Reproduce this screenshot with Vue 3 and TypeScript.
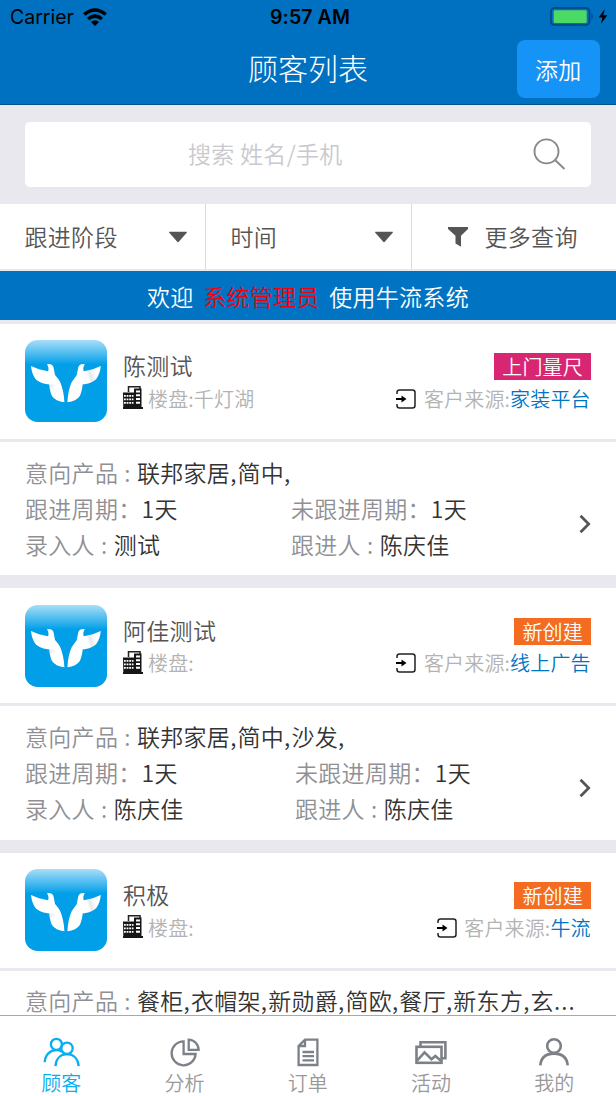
<script setup lang="ts">
interface Customer {
  name: string
  estate: string
  status: string
  tone: 'pink' | 'orange'
  source: string
  products: string
  cycle: string
  idle: string
  creator: string
  follower: string
  offset: 'near' | 'far'
}

const customers: Customer[] = [
  { name: '陈测试', estate: '千灯湖', status: '上门量尺', tone: 'pink', source: '家装平台', products: '联邦家居,简中,', cycle: '1天', idle: '1天', creator: '测试', follower: '陈庆佳', offset: 'near' },
  { name: '阿佳测试', estate: '', status: '新创建', tone: 'orange', source: '线上广告', products: '联邦家居,简中,沙发,', cycle: '1天', idle: '1天', creator: '陈庆佳', follower: '陈庆佳', offset: 'far' },
  { name: '积极', estate: '', status: '新创建', tone: 'orange', source: '牛流', products: '餐柜,衣帽架,新勋爵,简欧,餐厅,新东方,玄...', cycle: '', idle: '', creator: '', follower: '', offset: 'far' },
]

const pieces = (text: string) => text.split(/([,.])/).filter(Boolean)

const tabs = [
  { id: 'customer', label: '顾客' },
  { id: 'analysis', label: '分析' },
  { id: 'order', label: '订单' },
  { id: 'activity', label: '活动' },
  { id: 'mine', label: '我的' },
]
const activeTab = 'customer'
</script>

<template>
  <div class="screen">
    <header class="header">
      <div class="status">
        <div class="carrier">
          <span>Carrier</span>
          <svg class="wifi" width="24" height="18" viewBox="0 0 24 18">
            <g fill="none" stroke="#000" stroke-width="3.5">
              <path d="M1.3 6.5 Q12 -2.4 22.7 6.5" />
              <path d="M5.1 11 Q12 5.2 18.9 11" />
            </g>
            <path d="M8 14 Q12 10.5 16 14 L12 18Z" />
          </svg>
        </div>
        <span class="clock">9:57 AM</span>
        <svg class="battery" width="60" height="20" viewBox="0 0 60 20">
          <rect x="1" y="1" width="38.5" height="17" rx="3.5" fill="none" stroke="#00417a" stroke-width="1.6" />
          <rect x="3.7" y="3.3" width="33" height="12.6" rx="1.2" fill="#4cd964" />
          <path d="M41.5 6.3 Q44 9.5 41.5 12.7Z" fill="#00417a" />
          <path d="M54.8 2 L48.7 10.5 H52.5 L50.8 17 L57.3 8.2 H53.4Z" />
        </svg>
      </div>
      <div class="navbar">
        <h1>顾客列表</h1>
        <button class="add">添加</button>
      </div>
    </header>

    <div class="search-wrap">
      <div class="search">
        <span class="placeholder">搜索 姓名/手机</span>
        <svg width="34" height="34" viewBox="0 0 34 34" fill="none" stroke="#888" stroke-width="1.9">
          <circle cx="14.5" cy="13.4" r="12" />
          <path d="M23 22 L32.5 31" />
        </svg>
      </div>
    </div>

    <nav class="filters">
      <div class="filter">
        <span>跟进阶段</span>
        <svg width="20" height="12" viewBox="0 0 20 12"><path d="M1.6 .7H18.4Q19.5 .7 18.7 1.7L11 10.6Q10 11.7 9 10.6L1.3 1.7Q.5 .7 1.6 .7Z" fill="#555" /></svg>
      </div>
      <div class="filter">
        <span>时间</span>
        <svg width="20" height="12" viewBox="0 0 20 12"><path d="M1.6 .7H18.4Q19.5 .7 18.7 1.7L11 10.6Q10 11.7 9 10.6L1.3 1.7Q.5 .7 1.6 .7Z" fill="#555" /></svg>
      </div>
      <div class="filter more">
        <svg width="20" height="20" viewBox="0 0 20 20"><path d="M0 0H20V2L13 8.7V19.7L7.5 16.5V8.7L0 2Z" fill="#555" /></svg>
        <span>更多查询</span>
      </div>
    </nav>

    <div class="banner"><span>欢迎</span><em>系统管理员</em><span>使用牛流系统</span></div>

    <main class="list">
      <article v-for="c in customers" :key="c.name" class="card">
        <div class="summary">
          <svg class="logo" width="82" height="82" viewBox="0 0 82 82">
            <defs>
              <linearGradient id="sky" x1="0" y1="0" x2="0" y2="1">
                <stop offset="0" stop-color="#a9def8" />
                <stop offset=".3" stop-color="#019fe8" />
              </linearGradient>
              <linearGradient id="stem" x1="0" y1="0" x2=".5" y2="1">
                <stop offset=".4" stop-color="#fff" />
                <stop offset=".5" stop-color="#e6e7eb" />
                <stop offset=".68" stop-color="#fff" />
              </linearGradient>
              <linearGradient id="wing" x1="0" y1="0" x2="1" y2=".3">
                <stop offset=".35" stop-color="#fff" />
                <stop offset=".65" stop-color="#e8e9ed" />
                <stop offset=".8" stop-color="#fff" />
              </linearGradient>
            </defs>
            <rect width="82" height="82" rx="12.5" fill="url(#sky)" />
            <g>
              <path d="M22 24.2Q27.5 23.6 28.6 27.5L30 35L35 42Q38.8 50 39.4 62.2Q30.5 61.5 27 56Q25 52 24 44L22.8 32Q24.6 28 22 24.2Z" fill="url(#stem)" />
              <path d="M6 26L14 29.3L24 31.6Q31.5 35 35 42L36.5 47Q31 44.4 22.5 44.2Q14 43 10.5 39Q6.8 34 6 26Z" fill="#fff" />
            </g>
            <g transform="translate(81.8 0) scale(-1 1)">
              <path d="M22 24.2Q27.5 23.6 28.6 27.5L30 35L35 42Q38.8 50 39.4 62.2Q30.5 61.5 27 56Q25 52 24 44L22.8 32Q24.6 28 22 24.2Z" fill="#fff" />
              <path d="M6 26L14 29.3L24 31.6L25 44.2H22.5Q14 43 10.5 39Q6.8 34 6 26Z" fill="url(#wing)" />
            </g>
          </svg>
          <div class="info">
            <div class="row">
              <span class="name">{{ c.name }}</span>
              <span class="tag" :class="c.tone">{{ c.status }}</span>
            </div>
            <div class="row meta">
              <div class="estate">
                <svg width="20" height="23" viewBox="0 0 20 23">
                  <path d="M5.5 6V.8H17V3" fill="none" stroke="#222" stroke-width="1.5" />
                  <path d="M0 6.5H11V2.5H18.5V21H20V23H0V21H.3Z" fill="#161616" />
                  <path d="M1 9.8H10.5M1 13.3H10.5M1 16.8H10.5" stroke="#fff" stroke-width="1.8" stroke-dasharray="1.8 .8" />
                  <path d="M13 5.6H17M13 9.3H17M13 13H17M13 16.7H17" stroke="#fff" stroke-width="2" />
                </svg>
                <span>楼盘:{{ c.estate }}</span>
              </div>
              <div class="source">
                <svg width="20" height="20" viewBox="0 0 20 20">
                  <path d="M1 5V3.5Q1 1 3.5 1H16.5Q19 1 19 3.5V16.5Q19 19 16.5 19H3.5Q1 19 1 16.5V15" fill="none" stroke="#222" stroke-width="1.5" />
                  <path d="M0 9H5.5V6.5L10.5 10L5.5 13.5V11H0Z" />
                </svg>
                <span>客户来源:<b>{{ c.source }}</b></span>
              </div>
            </div>
          </div>
        </div>
        <div class="detail" :class="c.offset">
          <p class="wide"><i>意向产品 : </i><span v-for="(piece, n) in pieces(c.products)" :key="n" :class="{ mark: piece.length === 1 && ',.'.includes(piece) }">{{ piece }}</span></p>
          <template v-if="c.cycle">
            <p><i>跟进周期：</i>{{ c.cycle }}</p>
            <p><i>未跟进周期：</i>{{ c.idle }}</p>
            <p><i>录入人 : </i>{{ c.creator }}</p>
            <p><i>跟进人 : </i>{{ c.follower }}</p>
          </template>
          <svg class="chevron" width="12" height="20" viewBox="0 0 12 20"><path d="M1.5 1.7L9.7 10L1.5 18.3" fill="none" stroke="#555" stroke-width="2.7" /></svg>
        </div>
      </article>
    </main>

    <footer class="tabbar">
      <div v-for="t in tabs" :key="t.id" class="tab" :class="{ active: t.id === activeTab }">
        <svg width="40" height="34" viewBox="0 0 40 34" fill="none" stroke="currentColor" stroke-width="2.3">
          <template v-if="t.id === 'customer'">
            <circle cx="15.4" cy="8.3" r="5.5" />
            <circle cx="26" cy="12.3" r="5.7" />
            <path d="M3.7 26.3C4.2 18.5 9 14.2 15.4 14.2Q18.8 14.2 21 15.7M14.4 30.2C15 22.3 19.7 18.2 26 18.2S37 22.3 37.7 30.2" />
          </template>
          <template v-else-if="t.id === 'analysis'">
            <path d="M18.6 5.3A12 12 0 1 0 30.6 18H18.6Z" />
            <path d="M23.7 3.6V13.8H33.6A10.2 10.2 0 0 0 23.7 3.6Z" />
          </template>
          <template v-else-if="t.id === 'order'">
            <path d="M17 3.6H29.4V29H10.6V10ZM17 3.6V10H10.6M14.5 16H26M14.5 20.2H26M14.5 24.4H26" />
          </template>
          <template v-else-if="t.id === 'activity'">
            <rect x="5.5" y="10.8" width="25" height="16" stroke-width="2.6" />
            <path d="M9.5 10.5V6.3H34.4V22.2H31M6.3 24.5L13.5 16.3L20.5 23.2L24.3 20L30 24.8" stroke-width="2.6" />
          </template>
          <template v-else>
            <circle cx="20" cy="10" r="6.8" stroke-width="2.6" />
            <path d="M6.3 29.4C7 21.3 12.5 17.6 20 17.6S33 21.3 33.7 29.4" stroke-width="2.6" />
          </template>
        </svg>
        <span>{{ t.label }}</span>
      </div>
    </footer>
  </div>
</template>

<style>
body { margin: 0; }
</style>

<style scoped>
.screen {
  width: 616px;
  height: 1096px;
  overflow: hidden;
  display: flex;
  flex-direction: column;
  background: #e9e8ee;
  color: #555;
  font-family: "Noto Sans CJK SC", sans-serif;
  font-weight: 350;
  font-size: 23px;
  letter-spacing: 0.3px;
}
.header {
  flex: none;
  height: 104px;
  background: #0070c0;
  border-bottom: 1px solid #00508a;
}
.status {
  display: grid;
  grid-template-columns: 1fr auto 1fr;
  align-items: center;
  height: 34px;
  padding: 0 6px 0 10px;
  box-sizing: border-box;
  color: #000;
  font-family: Inter, sans-serif;
  font-weight: 400;
  font-size: 19.5px;
  letter-spacing: 0;
}
.carrier { display: flex; align-items: center; gap: 9px; }
.wifi { margin-top: -1px; }
.clock { font-weight: 600; letter-spacing: 0.1px; }
.battery { justify-self: end; }
.navbar {
  display: grid;
  grid-template-columns: 1fr auto 1fr;
  align-items: center;
  height: 70px;
  padding: 0 16.5px;
}
h1 {
  grid-column: 2;
  margin: 0;
  padding-bottom: 4px;
  color: #fff;
  font-size: 30px;
  font-weight: 300;
  line-height: 40px;
  letter-spacing: 0;
}
.add {
  justify-self: end;
  width: 82.5px;
  height: 58px;
  padding: 0 0 1px;
  border: 0;
  border-radius: 8px;
  background: #1593f7;
  color: #fff;
  font: inherit;
  letter-spacing: inherit;
}
.search-wrap { flex: none; padding: 17px 25px; }
.search {
  display: flex;
  align-items: center;
  height: 65px;
  padding-right: 25px;
  background: #fff;
  border-radius: 5px;
}
.placeholder { flex: 1; padding: 0 0 4px 163px; color: #c9c9ce; }
.filters {
  flex: none;
  display: grid;
  grid-template-columns: 206px 206px 1fr;
  height: 65px;
  margin-bottom: 2px;
  background: #fff;
}
.filter {
  display: flex;
  align-items: center;
  justify-content: space-between;
  padding: 0 17px 0 24.5px;
  border-right: 1px solid #dadada;
}
.filter span { padding-bottom: 1px; }
.filter.more { justify-content: flex-start; gap: 16.5px; padding-left: 36px; border: 0; }
.banner {
  flex: none;
  display: flex;
  justify-content: center;
  align-items: center;
  gap: 9.5px;
  height: 49px;
  margin-bottom: 4px;
  box-sizing: border-box;
  background: #0074c3;
  color: #fff;
}
.banner em { color: #f0000d; font-style: normal; }
.list { flex: 1; min-height: 0; overflow: hidden; }
.card { height: 251.2px; margin-bottom: 13.25px; }
.summary {
  display: flex;
  gap: 16px;
  height: 115px;
  padding: 16.2px 25px 0;
  margin-bottom: 3px;
  box-sizing: border-box;
  background: #fff;
}
.logo { flex: none; }
.info { flex: 1; padding-top: 10.6px; }
.row { display: flex; justify-content: space-between; align-items: center; height: 32px; }
.name { padding-bottom: 3px; }
.tag {
  height: 27px;
  padding: 0 8px;
  color: #fff;
  font-size: 20px;
  line-height: 27px;
  letter-spacing: 0.2px;
}
.pink { background: #d92673; }
.orange { background: #f36c21; }
.meta { color: #b3b3b3; font-size: 20px; letter-spacing: 0.15px; }
.meta span { padding-bottom: 1px; }
.estate, .source { display: flex; align-items: center; gap: 5px; }
.estate svg { margin-top: -2px; }
.source { gap: 7.5px; padding-right: 0.3px; }
.source b { color: #0074c3; font-weight: 350; }
.detail {
  display: grid;
  grid-template-columns: 266px 1fr auto;
  grid-template-rows: 36px 36px 36px;
  height: 133.2px;
  padding: 11.5px 25px 0;
  box-sizing: border-box;
  background: #fff;
  color: #333;
}
.detail.far { grid-template-columns: 270px 1fr auto; }
.detail p { margin: 0; line-height: 36px; white-space: pre; }
.detail i { color: #8f8f94; font-style: normal; word-spacing: 0.7px; }
.mark { letter-spacing: 1.15px; }
.wide { grid-column: 1 / 4; }
.chevron { grid-column: 3; grid-row: 2 / 4; align-self: center; margin-top: -3px; }
.tabbar {
  flex: none;
  display: grid;
  grid-template-columns: repeat(5, 1fr);
  height: 81px;
  box-sizing: border-box;
  border-top: 1px solid #a9a9a9;
  background: #fff;
}
.tab {
  display: flex;
  flex-direction: column;
  align-items: center;
  padding: 20px 0.5px 0 0;
  color: #7c8187;
  font-size: 20px;
  line-height: 26px;
  letter-spacing: 0;
}
.tab span { color: #999; }
.tab.active, .tab.active span { color: #08adf2; }
</style>
